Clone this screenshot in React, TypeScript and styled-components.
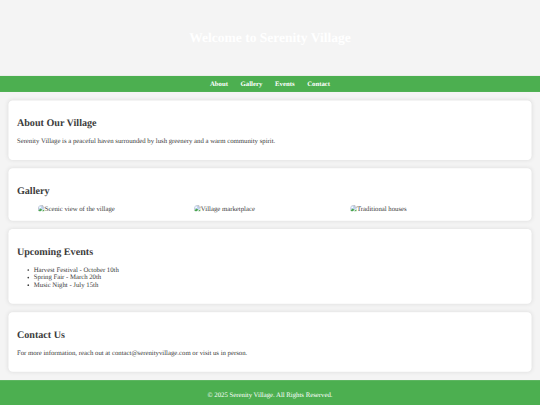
import React from 'react'
import styled, {createGlobalStyle} from 'styled-components'

const photos = ['Scenic view of the village', 'Village marketplace', 'Traditional houses']
const events = ['Harvest Festival - October 10th', 'Spring Fair - March 20th', 'Music Night - July 15th']

const MissingPhoto = () => (
  <PhotoIcon viewBox="0 0 16 16">
    <path d="M1 1h10l4 4v3l-8 7H1z" fill="#c3d5f2" />
    <path d="M1 15V1h10l4 4v3" fill="none" stroke="#9b9b9b" />
    <path d="M11 1v4h4" fill="#fff" stroke="#9b9b9b" />
    <circle cx="5" cy="5.5" r="2" fill="#fff" />
    <path d="M1 15v-2l5-5 4 3-4 4z" fill="#4ca64c" />
    <path d="M9 15l6-5v5z" fill="#4ca64c" />
  </PhotoIcon>
)

const App = () => {
  return (
    <Frame>
      <GlobalStyle />
      <Page>
        <Header>
          <Title>Welcome to Serenity Village</Title>
        </Header>
        <Nav>
          <NavLink href="#about">About</NavLink>
          <NavLink href="#gallery">Gallery</NavLink>
          <NavLink href="#events">Events</NavLink>
          <NavLink href="#contact">Contact</NavLink>
        </Nav>
        <Section id="about">
          <Heading>About Our Village</Heading>
          <Text>Serenity Village is a peaceful haven surrounded by lush greenery and a warm community spirit.</Text>
        </Section>
        <Section id="gallery">
          <Heading>Gallery</Heading>
          <Gallery>
            {photos.map((photo) => (
              <Photo key={photo}>
                <MissingPhoto />
                {photo}
              </Photo>
            ))}
          </Gallery>
        </Section>
        <Section id="events">
          <Heading>Upcoming Events</Heading>
          <List>
            {events.map((event) => (
              <li key={event}>{event}</li>
            ))}
          </List>
        </Section>
        <Section id="contact">
          <Heading>Contact Us</Heading>
          <Text>For more information, reach out at contact@serenityvillage.com or visit us in person.</Text>
        </Section>
        <Footer>
          <FooterText>© 2025 Serenity Village. All Rights Reserved.</FooterText>
        </Footer>
      </Page>
    </Frame>
  )
}

export default App

const GlobalStyle = createGlobalStyle`
body {
  margin: 0;
  background-color: #f4f4f4;
}
`;

const Frame = styled.div`
width: 540px;
height: 405px;
overflow: hidden;
`;

/* laid out for a 1280px desktop and scaled down to the 540px window */
const Page = styled.div`
width: 1280px;
height: 960px;
transform: scale(0.421875);
transform-origin: 0 0;
color: #3c3c3c;
font-family: "Liberation Serif", "Times New Roman", serif;
font-size: 16px;
line-height: 18px;
text-rendering: geometricPrecision;
`;

const Header = styled.header`
display: flow-root;
padding: 50px 20px;
color: #fff;
text-align: center;
`;

const Title = styled.h1`
margin: 21.44px 0;
font-size: 32px;
line-height: 37px;
`;

const Nav = styled.nav`
display: flex;
justify-content: center;
gap: 30px;
padding: 10px;
background-color: #4caf50;
`;

const NavLink = styled.a`
color: #fff;
font-weight: bold;
text-decoration: none;
`;

const Section = styled.section`
display: flow-root;
margin: 20px;
padding: 20.7px 20px 19.3px;
background-color: #fff;
border-radius: 10px;
box-shadow: 0 0 10px rgba(0, 0, 0, 0.1);
`;

const Heading = styled.h2`
margin: 19.92px 0;
font-size: 24px;
line-height: 27px;
`;

const Text = styled.p`
margin: 16px 0;
`;

const Gallery = styled.div`
display: flex;
justify-content: center;
gap: 10px;
`;

const Photo = styled.div`
display: flex;
width: 30%;
border-radius: 10px;
overflow: hidden;
`;

const PhotoIcon = styled.svg`
width: 16px;
height: 16px;
`;

const List = styled.ul`
margin: 16px 0;
padding-left: 40px;
`;

const Footer = styled.footer`
display: flow-root;
height: 58.6px;
box-sizing: border-box;
padding: 10px 10px 0;
background-color: #4caf50;
color: #fff;
text-align: center;
`;

const FooterText = styled(Text)`
margin-bottom: 0;
`;
